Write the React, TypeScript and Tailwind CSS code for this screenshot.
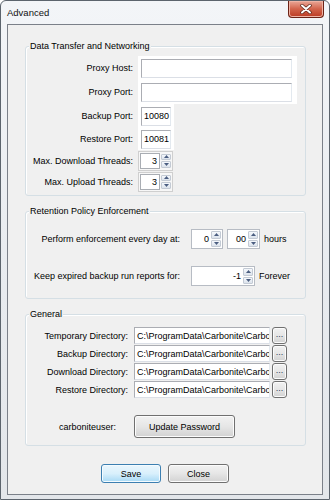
import React from "react";

const DIR = "C:\\ProgramData\\Carbonite\\Carbonite Backup";

function ArrowBtn({ up }: { up?: boolean }) {
  return (
    <div className="flex flex-1 items-center justify-center rounded-[1px] border border-[#c3cad4] bg-gradient-to-b from-[#f5f8fc] to-[#dce3ec]">
      <svg width="5" height="3" viewBox="0 0 5 3">
        <path d={up ? "M0 3 L2.5 0 L5 3Z" : "M0 0 L2.5 3 L5 0Z"} fill="#4a5d80" />
      </svg>
    </div>
  );
}

function Arrows() {
  return (
    <div className="flex w-[10px] flex-col gap-px py-px">
      <ArrowBtn up />
      <ArrowBtn />
    </div>
  );
}

function Spinner({ value, className }: { value: string; className: string }) {
  return (
    <div className={`flex h-[20px] items-stretch border border-[#b7bcc4] bg-white pr-px ${className}`}>
      <span className="flex flex-1 items-center justify-end pr-[2px]">{value}</span>
      <Arrows />
    </div>
  );
}

function ThreadSpinner({ value }: { value: string }) {
  return (
    <div className="flex h-[20px] w-[35px] items-stretch gap-px border border-[#cfcfcf] bg-[#f7f7f7] p-px">
      <span className="flex flex-1 items-center justify-end border border-[#a9adb3] bg-white pr-[2px]">{value}</span>
      <Arrows />
    </div>
  );
}

function TextBox({ value, className }: { value?: string; className: string }) {
  return (
    <div
      className={`flex items-center overflow-hidden whitespace-nowrap border border-[#abadb3] border-b-[#dbdfe6] border-r-[#e3e9ef] bg-white pl-[2px] ${className}`}
    >
      {value}
    </div>
  );
}

function Group({ title, className, children }: { title: string; className: string; children: React.ReactNode }) {
  return (
    <div className={`ml-[17px] w-[281px] rounded-[3px] border border-[#d5dfe5] shadow-[inset_1px_1px_0_#ffffff] ${className}`}>
      <div className="-mt-[7px] ml-[3px] w-fit bg-[#f0f0f0] px-px leading-[12px]">{title}</div>
      {children}
    </div>
  );
}

function Label({ children, className }: { children: React.ReactNode; className: string }) {
  return <div className={`shrink-0 text-right ${className}`}>{children}</div>;
}

function WinButton({ children, className }: { children: React.ReactNode; className: string }) {
  return (
    <div
      className={`flex items-center justify-center rounded-[3px] border border-[#707070] bg-gradient-to-b from-[#f2f2f2] via-[#e6e6e6] to-[#d2d2d2] shadow-[inset_0_0_0_1px_#fcfcfc] ${className}`}
    >
      {children}
    </div>
  );
}

function DirRow({ label }: { label: string }) {
  return (
    <div className="flex h-[17px] items-center">
      <Label className="w-[104px] pr-[2px]">{label}</Label>
      <TextBox value={DIR} className="ml-[4px] h-[17px] w-[136px]" />
      <WinButton className="ml-[2px] h-[17px] w-[15px] rounded-[2px] pb-[3px] text-[#2b3a55]">...</WinButton>
    </div>
  );
}

export default function App() {
  return (
    <div className="flex h-[500px] w-[330px] flex-col rounded-t-[6px] border border-[#5c646d] bg-gradient-to-b from-[#f3f5f8] via-[#e9ecf0] to-[#e3e6ea] font-['Liberation_Sans',Arial,sans-serif] text-[9px] leading-[12px] text-black">
      {/* title bar */}
      <div className="flex h-[23px] shrink-0 items-start justify-between">
        <div className="pl-[6px] pt-[5px] text-[9.5px] leading-[13px] text-[#111111]">Advanced</div>
        <div className="mr-[5px] flex h-[17px] w-[36px] items-center justify-center rounded-b-[4px] border border-t-0 border-[#6b2216] bg-gradient-to-b from-[#e9a797] via-[#d2634b] to-[#bb3a22] shadow-[inset_0_0_0_1px_#efb3a4]">
          <svg width="12" height="10" viewBox="0 0 12 10">
            <path d="M2 1.5 L10 8.5 M10 1.5 L2 8.5" stroke="#5a2418" strokeWidth="3.4" strokeLinecap="round" />
            <path d="M2 1.5 L10 8.5 M10 1.5 L2 8.5" stroke="#ffffff" strokeWidth="2" strokeLinecap="round" />
          </svg>
        </div>
      </div>

      {/* client */}
      <div className="mx-[6px] mb-[4px] flex flex-1 flex-col border border-[#7b8089] bg-[#f0f0f0]">
        <Group title="Data Transfer and Networking" className="mt-[21px] pb-[3px]">
          <div className="mt-[4px] flex h-[24px] items-center">
            <Label className="w-[112px] pr-[5px]">Proxy Host:</Label>
            <div className="flex w-[159px] items-center self-stretch bg-white">
              <TextBox className="ml-[3px] h-[19px] w-[151px]" />
            </div>
          </div>
          <div className="flex h-[24px] items-center">
            <Label className="w-[112px] pr-[5px]">Proxy Port:</Label>
            <div className="flex w-[159px] items-center self-stretch bg-white">
              <TextBox className="ml-[3px] h-[19px] w-[151px]" />
            </div>
          </div>
          <div className="flex h-[24px] items-center">
            <Label className="w-[112px] pr-[5px]">Backup Port:</Label>
            <div className="flex w-[36px] items-center self-stretch bg-white">
              <TextBox value="10080" className="ml-[3px] h-[19px] w-[30px]" />
            </div>
          </div>
          <div className="flex h-[22px] items-center">
            <Label className="w-[112px] pr-[5px]">Restore Port:</Label>
            <div className="flex w-[36px] items-center self-stretch bg-white">
              <TextBox value="10081" className="ml-[3px] h-[19px] w-[30px]" />
            </div>
          </div>
          <div className="flex h-[21px] items-center">
            <Label className="w-[112px] pr-[5px]">Max. Download Threads:</Label>
            <ThreadSpinner value="3" />
          </div>
          <div className="flex h-[21px] items-center">
            <Label className="w-[112px] pr-[5px]">Max. Upload Threads:</Label>
            <ThreadSpinner value="3" />
          </div>
        </Group>

        <Group title="Retention Policy Enforcement" className="mt-[15px] pb-[12px]">
          <div className="mt-[12px] flex h-[20px] items-center">
            <Label className="w-[155px] pr-px">Perform enforcement every day at:</Label>
            <Spinner value="0" className="ml-[10px] w-[32px]" />
            <Spinner value="00" className="ml-[4px] w-[33px]" />
            <span className="ml-[4px]">hours</span>
          </div>
          <div className="mt-[17px] flex h-[20px] items-center">
            <Label className="w-[155px] pr-px">Keep expired backup run reports for:</Label>
            <Spinner value="-1" className="ml-[10px] w-[64px]" />
            <span className="ml-[4px]">Forever</span>
          </div>
        </Group>

        <Group title="General" className="mt-[15px] pb-[7px]">
          <div className="mt-[7px] flex flex-col gap-px">
            <DirRow label="Temporary Directory:" />
            <DirRow label="Backup Directory:" />
            <DirRow label="Download Directory:" />
            <DirRow label="Restore Directory:" />
          </div>
          <div className="mt-[17px] flex h-[23px] items-center">
            <Label className="w-[104px] pr-[14px]">carboniteuser:</Label>
            <WinButton className="ml-[4px] h-[23px] w-[101px]">Update Password</WinButton>
          </div>
        </Group>

        <div className="mt-[18px] flex justify-center gap-[7px]">
          <div className="flex h-[19px] w-[60px] items-center justify-center rounded-[3px] border border-[#3c7fb1] bg-gradient-to-b from-[#eaf6fd] via-[#d9f0fc] to-[#a7d9f5] shadow-[inset_0_0_0_1px_#f4fbff]">
            Save
          </div>
          <WinButton className="h-[19px] w-[61px]">Close</WinButton>
        </div>
      </div>
    </div>
  );
}
